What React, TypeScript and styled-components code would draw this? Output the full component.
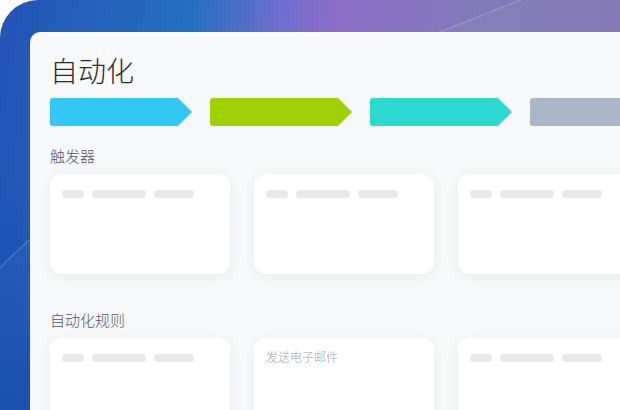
import styled, { createGlobalStyle } from "styled-components"

const GlobalStyle = createGlobalStyle`
    html, body {
        margin: 0;
        padding: 0;
        background: #ffffff;
        font-family: "Noto Sans CJK SC", "Noto Sans", sans-serif;
    }
`

const Fundo = styled.div`
    position: relative;
    width: 620px;
    height: 410px;
    overflow: hidden;
    background: #ffffff;
`

const Moldura = styled.div`
    position: relative;
    width: 620px;
    height: 410px;
    box-sizing: border-box;
    padding: 32px 0 0 30px;
    border-top-left-radius: 38px;
    overflow: hidden;
    background:
        linear-gradient(180deg, rgba(30, 74, 168, 0) 40%, rgba(16, 72, 170, 0.9) 100%),
        linear-gradient(100deg, #2453b6 0%, #2470c0 28%, #6a6fcc 40%, #8b6dc8 48%, #827ab8 70%, #7e72b0 100%);
`

const Brilho = styled.svg`
    position: absolute;
    left: 0;
    top: 0;
    pointer-events: none;
`

const Painel = styled.div`
    position: relative;
    height: 100%;
    background: #f7f8fa;
    border-top-left-radius: 10px;
    padding: 19px 0 0 20px;
    box-sizing: border-box;
    overflow: hidden;
`

const Titulo = styled.h1`
    margin: 0;
    font-size: 28px;
    line-height: 38px;
    font-weight: 300;
    color: #2b2b2b;
`

const Etapas = styled.div`
    display: flex;
    gap: 18px;
    margin-top: 9px;
`

const Seta = styled.div<{ $cor: string; $ultima?: boolean }>`
    flex: none;
    width: ${p => (p.$ultima ? "160px" : "142px")};
    height: 28px;
    background: ${p => p.$cor};
    border-radius: 3px;
    clip-path: ${p =>
        p.$ultima
            ? "none"
            : "polygon(0 0, 128px 0, 140px 12px, 142px 14px, 140px 16px, 128px 28px, 0 28px)"};
`

const Secao = styled.h2<{ $topo: number }>`
    margin: ${p => p.$topo}px 0 0 0;
    font-size: 15px;
    line-height: 22px;
    font-weight: 300;
    color: #55575c;
`

const Grade = styled.div`
    display: flex;
    gap: 24px;
    margin-top: 7px;
`

const Cartao = styled.div`
    flex: none;
    width: 180px;
    height: 100px;
    background: #ffffff;
    border-radius: 12px;
    box-shadow: 0 2px 14px rgba(40, 50, 80, 0.07);
    padding: 16px 12px;
    box-sizing: border-box;
`

const Linhas = styled.div`
    display: flex;
    gap: 8px;
`

const Pilula = styled.div<{ $largura: number }>`
    width: ${p => p.$largura}px;
    height: 8px;
    border-radius: 4px;
    background: #e8e8ea;
`

const TextoCartao = styled.div`
    margin-top: -5px;
    font-size: 12px;
    line-height: 16px;
    font-weight: 300;
    color: #a2a4a8;
`

function Esqueleto() {
    return (
        <Linhas>
            <Pilula $largura={22} />
            <Pilula $largura={54} />
            <Pilula $largura={40} />
        </Linhas>
    )
}

export default function App() {
    return (
        <Fundo>
            <GlobalStyle />
            <Moldura>
                <Brilho width="620" height="410" viewBox="0 0 620 410">
                    <path d="M0 268 C 120 140, 380 60, 620 -40" stroke="rgba(255,255,255,0.18)" strokeWidth="1.5" fill="none" />
                    <path d="M0 268 C 120 140, 380 60, 620 -40 L 620 410 L 0 410 Z" fill="rgba(255,255,255,0.04)" />
                </Brilho>
                <Painel>
                    <Titulo>自动化</Titulo>
                    <Etapas>
                        <Seta $cor="#33c7f6" />
                        <Seta $cor="#9fd000" />
                        <Seta $cor="#2bd9d1" />
                        <Seta $cor="#a8b6c7" $ultima />
                    </Etapas>
                    <Secao $topo={19}>触发器</Secao>
                    <Grade>
                        <Cartao><Esqueleto /></Cartao>
                        <Cartao><Esqueleto /></Cartao>
                        <Cartao><Esqueleto /></Cartao>
                    </Grade>
                    <Secao $topo={35}>自动化规则</Secao>
                    <Grade>
                        <Cartao><Esqueleto /></Cartao>
                        <Cartao><TextoCartao>发送电子邮件</TextoCartao></Cartao>
                        <Cartao><Esqueleto /></Cartao>
                    </Grade>
                </Painel>
            </Moldura>
        </Fundo>
    )
}
